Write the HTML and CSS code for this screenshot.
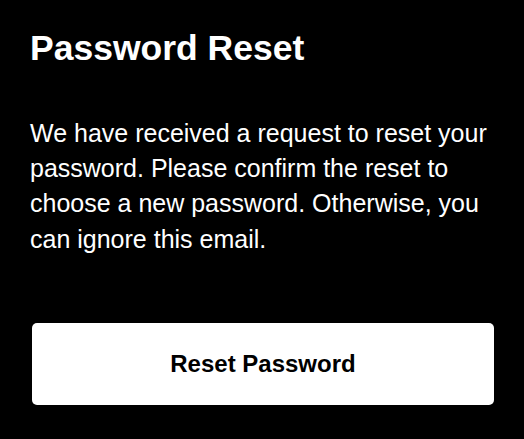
FILE: index.html
```html
<!DOCTYPE html>
<html lang="en">
<head>
<meta charset="utf-8">
<title>Password Reset</title>
<link rel="stylesheet" href="styles.css">
</head>
<body>
<main class="card">
  <h1 class="title">Password Reset</h1>
  <p class="message">We have received a request to reset your password. Please confirm the reset to choose a new password. Otherwise, you can ignore this email.</p>
  <a class="button" href="#">Reset Password</a>
</main>
</body>
</html>
```
FILE: styles.css
```css
html, body {
  margin: 0;
  padding: 0;
  background: #000;
}
body {
  font-family: "Liberation Sans", Arial, sans-serif;
  color: #fff;
}
.card {
  padding: 28px 30px 30px 30px;
  display: flex;
  flex-direction: column;
}
.title {
  margin: 0;
  font-size: 35.5px;
  line-height: 40px;
  font-weight: 700;
}
.message {
  margin: 48px 0 0 0;
  font-size: 25px;
  line-height: 35.2px;
  font-weight: 400;
}
.button {
  display: block;
  margin: 66.5px 0 0 2px;
  padding: 29px 0;
  background: #fff;
  color: #000;
  border-radius: 5px;
  text-align: center;
  text-decoration: none;
  font-size: 24px;
  line-height: 24px;
  font-weight: 700;
}
```
